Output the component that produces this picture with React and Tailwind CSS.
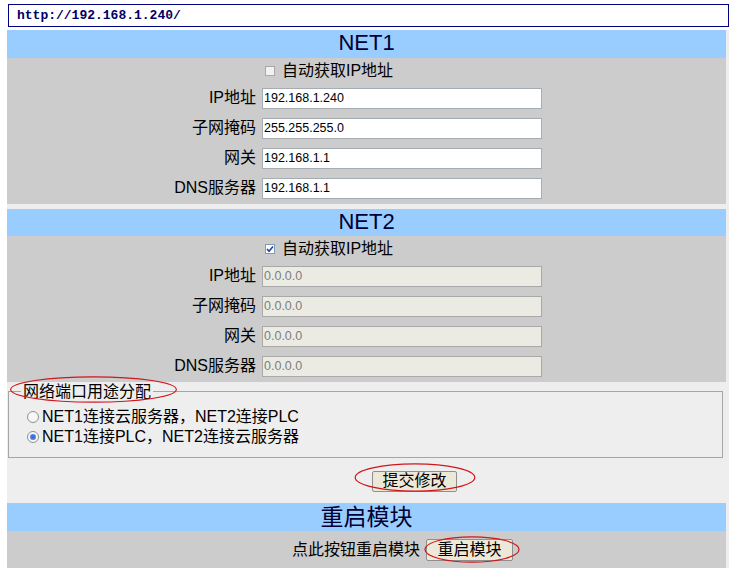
import React from "react";

const FONT = { fontFamily: '"Liberation Sans", Arial, "Noto Sans CJK SC", sans-serif' };

// red hand-drawn ellipse laid over the control it marks
const Ring = ({ className }) => (
  <svg className={`absolute pointer-events-none ${className}`} viewBox="0 0 100 100" preserveAspectRatio="none">
    <ellipse cx="50" cy="50" rx="49" ry="47" fill="none" stroke="#d0161b" strokeWidth="1.2" vectorEffect="non-scaling-stroke" />
  </svg>
);

const CheckBox = ({ checked }) =>
  checked ? (
    <span className="w-[10px] h-[10px] border border-[#7f9db9] bg-white flex items-center justify-center">
      <svg width="8" height="8" viewBox="0 0 8 8">
        <path d="M1 4 L3 6.2 L7 1.5" fill="none" stroke="#21409a" strokeWidth="1.6" />
      </svg>
    </span>
  ) : (
    <span className="w-[10px] h-[10px] border border-[#a8a8a8] bg-[#f2f2f2]" />
  );

const Radio = ({ checked }) => (
  <span className="w-[12px] h-[12px] rounded-full border border-[#8e8f8f] bg-[#f7f7f7] flex items-center justify-center shrink-0">
    {checked && <span className="w-[6px] h-[6px] rounded-full bg-[#3b6ccf] shadow-[inset_0_0_2px_#9cc0ff]" />}
  </span>
);

const Field = ({ label, value, disabled }) => (
  <div className="flex items-center h-[30px] gap-[6px]">
    <span className="w-[249px] text-right text-[16px] leading-[18px] text-black">{label}</span>
    <input
      readOnly
      value={value}
      disabled={disabled}
      className={
        disabled
          ? "w-[280px] h-[21px] px-[1px] border border-[#a9a9a9] bg-[#ebebe4] text-[12.5px] text-[#7d7d7d] outline-none"
          : "w-[280px] h-[21px] px-[1px] border border-[#a5acb2] bg-white text-[12.5px] text-black outline-none"
      }
      style={FONT}
    />
  </div>
);

const NetBlock = ({ title, auto, ip, mask, gw, dns, headH }) => (
  <div className="w-[719px]">
    <div className={`${headH} bg-[#99ccff] text-center text-[22px] leading-[25px] text-[#000033]`}>{title}</div>
    <div className="bg-[#cccccc] pb-[1px]">
      <div className="flex items-center h-[25px] gap-[6px]">
        <span className="w-[249px]" />
        <span className="flex items-center gap-[7px] pl-[3px] text-[16px] leading-[18px]">
          <CheckBox checked={auto} />
          自动获取IP地址
        </span>
      </div>
      <Field label="IP地址" value={ip} disabled={auto} />
      <Field label="子网掩码" value={mask} disabled={auto} />
      <Field label="网关" value={gw} disabled={auto} />
      <Field label="DNS服务器" value={dns} disabled={auto} />
    </div>
  </div>
);

export default function App() {
  return (
    <div className="bg-white min-h-screen pt-[4px]" style={FONT}>
      <div className="ml-[8px] w-[721px] h-[23px] border border-[#000080] flex items-center pl-[8px]">
        <span
          className="text-[13px] font-bold text-[#000066]"
          style={{ fontFamily: '"Liberation Mono", "Courier New", monospace' }}
        >
          http://192.168.1.240/
        </span>
      </div>

      <div className="mt-[3px] ml-[7px] w-[722px] bg-[#eeeeee]">
        <NetBlock title="NET1" auto={false} ip="192.168.1.240" mask="255.255.255.0" gw="192.168.1.1" dns="192.168.1.1" headH="h-[28px]" />
        <div className="h-[5px]" />
        <NetBlock title="NET2" auto={true} ip="0.0.0.0" mask="0.0.0.0" gw="0.0.0.0" dns="0.0.0.0" headH="h-[27px]" />

        <fieldset className="ml-[1px] w-[715px] border border-[#a5a5a5] pl-[12px] pt-[6px] pb-[10px]">
          <legend className="relative px-[2px] text-[16px] leading-[19px] text-black">
            网络端口用途分配
            <Ring className="left-[-12px] top-[-6px] w-[169px] h-[27px]" />
          </legend>
          <div className="ml-[6px] flex items-center gap-[3px] h-[20px] text-[16px]">
            <Radio checked={false} />
            NET1连接云服务器，NET2连接PLC
          </div>
          <div className="ml-[6px] flex items-center gap-[3px] h-[20px] text-[16px]">
            <Radio checked={true} />
            NET1连接PLC，NET2连接云服务器
          </div>
        </fieldset>

        <div className="h-[45px] pt-[11px] pl-[365px]">
          <span className="relative inline-block">
            <button className="w-[85px] h-[21px] border border-[#8f8f8f] rounded-[2px] bg-[#ece9d8] text-[16px] leading-[18px] text-black">
              提交修改
            </button>
            <Ring className="left-[-18px] top-[-6px] w-[122px] h-[29px]" />
          </span>
        </div>

        <div className="w-[719px]">
          <div className="h-[28px] bg-[#99ccff] text-center text-[23px] leading-[28px] text-[#000033]">重启模块</div>
          <div className="h-[37px] bg-[#cccccc] flex items-center pl-[285px] gap-[6px]">
            <span className="text-[16px] leading-[18px] text-black">点此按钮重启模块</span>
            <span className="relative inline-block">
              <button className="w-[87px] h-[22px] border border-[#8f8f8f] rounded-[2px] bg-[#ece9d8] text-[16px] leading-[18px] text-black">
                重启模块
              </button>
              <Ring className="left-[-2px] top-[-2px] w-[96px] h-[27px]" />
            </span>
          </div>
        </div>
      </div>
    </div>
  );
}
